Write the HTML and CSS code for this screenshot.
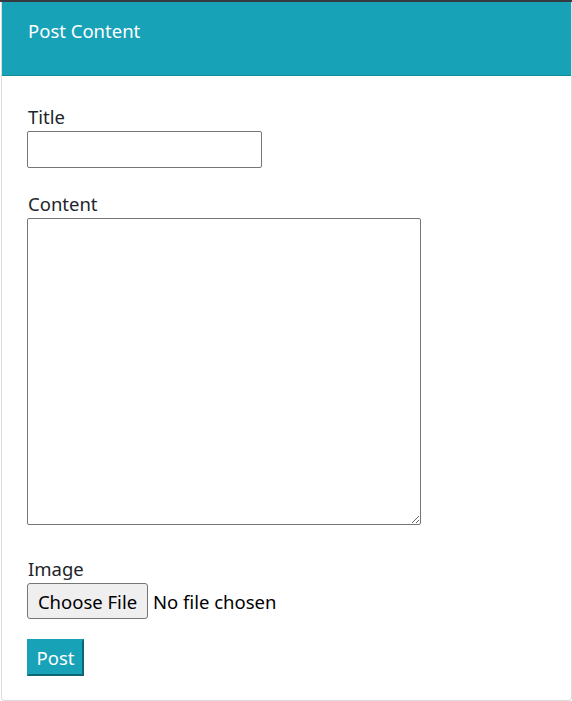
FILE: index.html
```html
<!DOCTYPE html>
<html>
<head>
<meta charset="utf-8">
<link rel="stylesheet" href="styles.css">
</head>
<body>
<div class="topbar"></div>
<div class="card">
  <div class="card-header">Post Content</div>
  <form class="card-body">
    <div class="group">
      <label class="label" for="title">Title</label>
      <input class="text-input" id="title" type="text">
    </div>
    <div class="group">
      <label class="label" for="content">Content</label>
      <textarea class="textarea" id="content"></textarea>
    </div>
    <div class="group group-image">
      <label class="label">Image</label>
      <div class="file-row">
        <span class="file-btn">Choose File</span>
        <span class="file-status">No file chosen</span>
      </div>
    </div>
    <button class="post-btn" type="button">Post</button>
  </form>
</div>
</body>
</html>
```
FILE: styles.css
```css
html, body {
  margin: 0;
  padding: 0;
  background: #fff;
}
body {
  font-family: "Noto Sans", "Open Sans", sans-serif;
  font-size: 18.5px;
  color: #212529;
  width: 572px;
  height: 701px;
  overflow: hidden;
}
.topbar {
  height: 2px;
  background: #343a40;
}
.card {
  margin-left: 1px;
  width: 569px;
  border: 1px solid #dcdcdc;
  border-top: none;
  border-radius: 0 0 4px 4px;
}
.card-header {
  background: #17a2b8;
  color: #fff;
  height: 74px;
  box-sizing: border-box;
  padding: 15px 26px 0;
  line-height: 27px;
  border-bottom: 1px solid #138a9c;
}
.card-body {
  display: flex;
  flex-direction: column;
  align-items: flex-start;
  padding: 28px 25px 24px;
}
.group {
  display: flex;
  flex-direction: column;
  align-items: flex-start;
  margin-bottom: 23px;
}
.group-image {
  margin-top: 8px;
  margin-bottom: 20px;
}
.label {
  line-height: 25px;
  padding: 0 0 2px 1px;
}
.text-input {
  box-sizing: border-box;
  width: 235px;
  height: 37px;
  margin: 0;
  border: 1px solid #767676;
  border-radius: 2px;
  font: inherit;
}
.textarea {
  box-sizing: border-box;
  width: 394px;
  height: 307px;
  margin: 0;
  border: 1px solid #767676;
  border-radius: 2px;
  font: inherit;
}
.file-row {
  display: flex;
  align-items: center;
  gap: 5px;
}
.file-btn {
  box-sizing: border-box;
  height: 36px;
  width: 121px;
  display: flex;
  align-items: center;
  justify-content: center;
  background: #efefef;
  border: 1px solid #767676;
  border-radius: 3px;
  color: #000;
}
.file-status {
  color: #000;
}
.post-btn {
  box-sizing: border-box;
  width: 57px;
  height: 37px;
  margin: 0;
  padding: 0;
  background: #17a2b8;
  color: #fff;
  font: inherit;
  border: 2px solid;
  border-color: #17a2b8 #0e6674 #0e6674 #17a2b8;
}
```
